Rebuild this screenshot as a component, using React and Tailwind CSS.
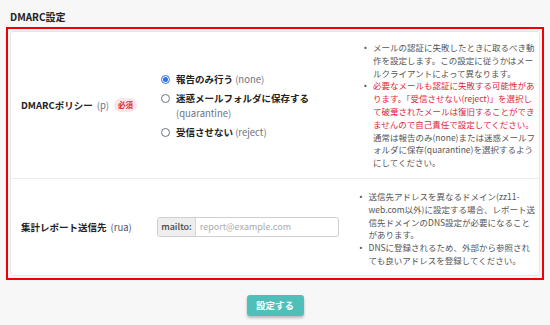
const Bullet = ({ children }) => (
  <div className="flex">
    <span className="w-[9px] shrink-0 text-[8px] leading-[12.8px] text-gray-600">•</span>
    <div>{children}</div>
  </div>
);

const Radio = ({ checked, children }) => (
  <label className="flex items-start gap-[6px]">
    <span
      className={
        "mt-[3px] w-[9px] h-[9px] rounded-full shrink-0 flex items-center justify-center " +
        (checked ? "border border-[#2f6fe6] bg-white" : "border border-gray-500 bg-white")
      }
    >
      {checked && <span className="w-[5px] h-[5px] rounded-full bg-[#2f6fe6]" />}
    </span>
    <span>{children}</span>
  </label>
);

const App = () => {
  return (
    <div
      className="w-[550px] h-[325px] bg-[#f7f7f7] overflow-hidden"
      style={{ fontFamily: '"Noto Sans CJK JP", "Noto Sans", sans-serif' }}
    >
      <div className="px-[10px] pt-[9px] h-[27px] text-[10px] font-bold text-[#222] leading-[16px]">DMARC設定</div>

      <div className="mx-[6px] border-2 border-[#f00000] p-[2px]">
        <div className="bg-white border border-[#e6e6e6] rounded-[3px]">
          {/* row 1 */}
          <div className="flex h-[147px] border-b border-[#ececec]">
            <div className="w-[148px] pl-[10px] flex items-center gap-[4px] text-[9.5px] text-[#222]">
              <span className="font-bold">DMARCポリシー</span>
              <span className="text-gray-500">(p)</span>
              <span className="ml-[1px] px-[4px] h-[14px] leading-[14px] rounded-full bg-[#fde6e8] text-[#e0263a] text-[7.5px] font-bold">必須</span>
            </div>
            <div className="w-[203px] pl-[2px] flex flex-col justify-center gap-[4px] text-[9.5px] leading-[15px] text-[#222] pt-[2px]">
              <Radio checked>
                <span className="font-bold">報告のみ行う</span> <span className="text-gray-500">(none)</span>
              </Radio>
              <Radio>
                <span className="font-bold">迷惑メールフォルダに保存する</span>
                <br />
                <span className="text-gray-500">(quarantine)</span>
              </Radio>
              <Radio>
                <span className="font-bold">受信させない</span> <span className="text-gray-500">(reject)</span>
              </Radio>
            </div>
            <div className="flex-1 pl-[2px] pr-[4px] pt-[9px] text-[8.5px] leading-[12.8px] text-[#555] whitespace-nowrap">
              <Bullet>
                メールの認証に失敗したときに取るべき動
                <br />
                作を設定します。この設定に従うかはメー
                <br />
                ルクライアントによって異なります。
              </Bullet>
              <Bullet>
                <span className="text-[#e0263a]">
                  必要なメールも認証に失敗する可能性があ
                  <br />
                  ります。「受信させない(reject)」を選択し
                  <br />
                  て破棄されたメールは復旧することができ
                  <br />
                  ませんので自己責任で設定してください。
                </span>
                <br />
                通常は報告のみ(none)または迷惑メールフ
                <br />
                ォルダに保存(quarantine)を選択するよう
                <br />
                にしてください。
              </Bullet>
            </div>
          </div>

          {/* row 2 */}
          <div className="flex h-[96px]">
            <div className="w-[148px] pl-[10px] flex items-center gap-[4px] text-[9.5px] text-[#222]">
              <span className="font-bold">集計レポート送信先</span>
              <span className="text-gray-600">(rua)</span>
            </div>
            <div className="w-[203px] flex items-center">
              <div className="w-[182px] h-[20px] flex border border-[#cfcfcf] rounded-[3px] overflow-hidden text-[9px]">
                <span className="px-[3px] flex items-center bg-[#eeeeee] border-r border-[#d6d6d6] text-[#444] font-medium">mailto:</span>
                <span className="px-[4px] flex items-center text-[#aaa]">report@example.com</span>
              </div>
            </div>
            <div className="flex-1 pl-[2px] pr-[4px] pt-[11px] text-[8.5px] leading-[12.8px] text-[#555] whitespace-nowrap">
              <Bullet>
                送信先アドレスを異なるドメイン(zz11-
                <br />
                web.com以外)に設定する場合、レポート送
                <br />
                信先ドメインのDNS設定が必要になること
                <br />
                があります。
              </Bullet>
              <Bullet>
                DNSに登録されるため、外部から参照され
                <br />
                ても良いアドレスを登録してください。
              </Bullet>
            </div>
          </div>
        </div>
      </div>

      <div className="flex justify-center pt-[15px]">
        <button className="w-[57px] h-[21px] rounded-[3px] bg-[#4fbfba] text-white text-[9.5px] font-bold shadow-[0_2px_3px_rgba(0,0,0,0.25)]">
          設定する
        </button>
      </div>
    </div>
  );
};

export default App;
